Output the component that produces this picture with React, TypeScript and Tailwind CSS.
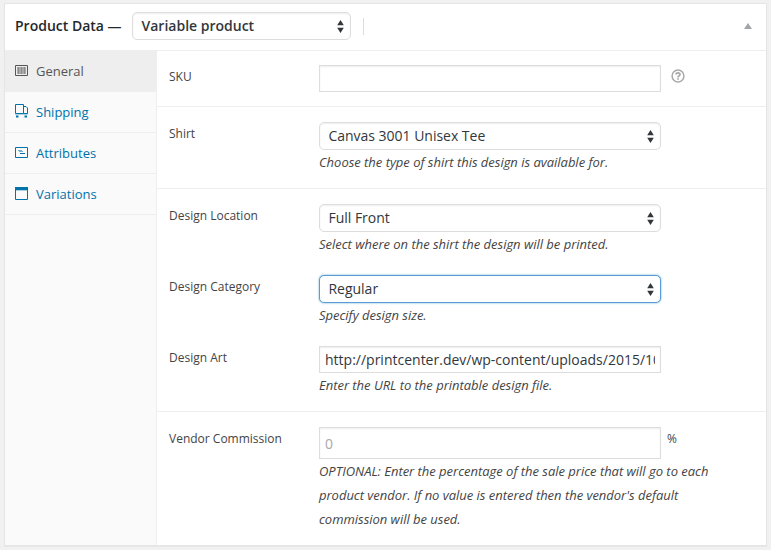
import type { ReactNode } from "react";

function Arrows() {
  return (
    <svg className="shrink-0" width="7" height="13" viewBox="0 0 7 13" fill="#32373c">
      <path d="M3.5 0 6.8 5.3H.2zM3.5 13 .2 7.7h6.6z" />
    </svg>
  );
}

function Select({ value, focused = false }: { value: string; focused?: boolean }) {
  const look = focused
    ? "border-[#5b9dd9] shadow-[0_0_2px_rgba(30,140,190,0.8)]"
    : "border-[#ddd] shadow-[inset_0_1px_2px_rgba(0,0,0,0.07)]";
  return (
    <button className={`flex h-7 w-[342px] items-center justify-between rounded-[5px] border bg-white pl-[8.5px] pr-[6px] text-sm leading-[26px] tracking-[-0.02px] text-[#32373c] ${look}`}>
      <span>{value}</span>
      <Arrows />
    </button>
  );
}

function Input({ value = "", placeholder = "", height = "h-[27px]" }: { value?: string; placeholder?: string; height?: string }) {
  return (
    <input
      readOnly
      value={value}
      placeholder={placeholder}
      className={`block w-[342px] border border-[#ddd] bg-white px-[5px] text-sm text-[#32373c] shadow-[inset_0_1px_2px_rgba(0,0,0,0.07)] placeholder:text-[#a9a9a9] ${height}`}
    />
  );
}

function Field({ label, help, after, children }: { label: string; help?: string; after?: ReactNode; children: ReactNode }) {
  return (
    <div className="flex">
      <label className="w-[150px] shrink-0 text-xs leading-6">{label}</label>
      <div className="w-[400px]">
        <div className="flex">
          {children}
          {after}
        </div>
        {help && <p className="text-[13px] italic leading-6 tracking-[-0.02px]">{help}</p>}
      </div>
    </div>
  );
}

function BarcodeIcon() {
  return (
    <svg width="13" height="11" viewBox="0 0 13 11">
      <path d="M.5.5h12v10H.5z" fill="#eee" stroke="#555" />
      <path d="M2 2h9v7H2z" fill="#aaa" />
      <path d="M3.5 2v7M6.5 2v7M9.5 2v7" stroke="#8c8c8c" />
    </svg>
  );
}

function TruckIcon() {
  return (
    <svg width="13" height="14" viewBox="0 0 13 14" fill="none" stroke="#0073aa">
      <path d="M.5.5h8v9h-8zM8.5 2.5h2.500l1.500 1.500v5.500h-4" />
      <path d="M0 10.5h13" opacity=".3" />
      <path d="M1 11.5h2.500v2H1zM9.500 11.500h2.500v2H9.500z" fill="#0073aa" stroke="none" />
    </svg>
  );
}

function CardIcon() {
  return (
    <svg width="13" height="11" viewBox="0 0 13 11" fill="none" stroke="#0073aa">
      <path d="M.5.5h12v10H.5z" />
      <path d="M3 3.500h4M4 4.500h4" opacity=".55" />
      <path d="M5 6.500h5" />
    </svg>
  );
}

function WindowIcon() {
  return (
    <svg width="13" height="13" viewBox="0 0 13 13">
      <path d="M.5.5h12v12H.5z" fill="none" stroke="#0073aa" />
      <path d="M0 0h13v3H0z" fill="#0073aa" />
      <path d="M1 3h11v1H1z" fill="#0073aa" opacity=".3" />
    </svg>
  );
}

const tabs = [
  { name: "General", icon: <BarcodeIcon />, look: "bg-[#eee] text-[#555]", iconTop: "mt-[14px]" },
  { name: "Shipping", icon: <TruckIcon />, look: "text-[#0073aa]", iconTop: "mt-3" },
  { name: "Attributes", icon: <CardIcon />, look: "text-[#0073aa]", iconTop: "mt-[14px]" },
  { name: "Variations", icon: <WindowIcon />, look: "text-[#0073aa]", iconTop: "mt-[13px]" },
];

export default function App() {
  return (
    <div className="h-[550px] w-[771px] overflow-hidden bg-[#f1f1f1] pl-1 pt-[3px] font-['Open_Sans',sans-serif] text-[#444]">
      <section className="flex h-[543px] w-[763px] flex-col border border-[#e5e5e5] bg-white shadow-[0_1px_1px_rgba(0,0,0,0.04)]">
        <header className="flex h-[47px] shrink-0 items-start border-b border-[#eee] pl-[10px] pr-[14px] pt-2 text-sm font-semibold text-[#23282d]">
          <h2 className="w-[117px] leading-7">Product Data —</h2>
          <button className="flex h-7 w-[219px] items-center justify-between rounded-[5px] border border-[#ddd] pl-[8.5px] pr-[6px] text-[#32373c] shadow-[inset_0_1px_2px_rgba(0,0,0,0.07)]">
            <span>Variable product</span>
            <Arrows />
          </button>
          <span className="ml-3 mt-1.5 h-[17px] w-px bg-[#ddd]" />
          <svg className="ml-auto mt-[11px]" width="8" height="6" viewBox="0 0 8 6" fill="#a0a5aa">
            <path d="M4 0 8 6H0z" />
          </svg>
        </header>
        <div className="flex flex-1">
          <nav className="w-[152px] shrink-0 border-r border-[#eee] bg-[#fafafa]">
            {tabs.map((tab) => (
              <a key={tab.name} className={`flex h-[41px] items-start border-b border-[#eee] pl-[10px] text-[13px] leading-[40px] ${tab.look}`}>
                <span className={`w-[21px] ${tab.iconTop}`}>{tab.icon}</span>
                {tab.name}
              </a>
            ))}
          </nav>
          <div className="flex-1">
            <div className="h-14 border-b border-[#eee] pl-3 pt-[14px]">
              <Field
                label="SKU"
                after={
                  <svg className="ml-[10px] mt-1" width="14" height="14" viewBox="0 0 14 14" fill="none" stroke="#aaa" strokeWidth="1.5">
                    <circle cx="7" cy="7" r="5.9" />
                    <path d="M5 5.5c0-2.200 4-2.200 4 0C9 6.900 7 6.700 7 8.400M7 9.200v1.600" strokeWidth="1.7" />
                  </svg>
                }
              >
                <Input />
              </Field>
            </div>
            <div className="h-[82px] border-b border-[#eee] pl-3 pt-[15px]">
              <Field label="Shirt" help="Choose the type of shirt this design is available for.">
                <Select value="Canvas 3001 Unisex Tee" />
              </Field>
            </div>
            <div className="flex h-[223px] flex-col gap-[19px] border-b border-[#eee] pl-3 pt-[15px]">
              <Field label="Design Location" help="Select where on the shirt the design will be printed.">
                <Select value="Full Front" />
              </Field>
              <Field label="Design Category" help="Specify design size.">
                <Select value="Regular" focused />
              </Field>
              <Field label="Design Art" help="Enter the URL to the printable design file.">
                <Input value="http://printcenter.dev/wp-content/uploads/2015/10/design.png" />
              </Field>
            </div>
            <div className="pl-3 pt-[15px]">
              <Field
                label="Vendor Commission"
                help="OPTIONAL: Enter the percentage of the sale price that will go to each product vendor. If no value is entered then the vendor's default commission will be used."
                after={<span className="ml-1.5 text-xs leading-6">%</span>}
              >
                <Input placeholder="0" height="h-8" />
              </Field>
            </div>
          </div>
        </div>
      </section>
    </div>
  );
}
